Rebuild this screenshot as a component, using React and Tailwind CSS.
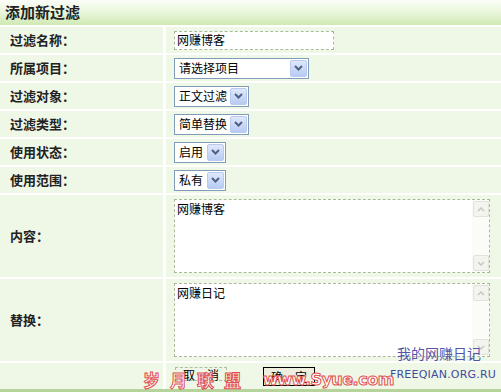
import React from "react";

const font = { fontFamily: '"Noto Sans CJK SC", "Noto Sans", sans-serif' };

function Arrow() {
  return (
    <span className="flex h-[17px] w-[17px] shrink-0 items-center justify-center rounded-[2px] border border-[#b9c9ef] bg-gradient-to-b from-[#dfe8fb] to-[#b9cbf3]">
      <svg width="9" height="6" viewBox="0 0 9 6">
        <path d="M1 1 L4.5 4.5 L8 1" fill="none" stroke="#4d6185" strokeWidth="2" />
      </svg>
    </span>
  );
}

function Select({ value, width }) {
  return (
    <div
      className="flex h-[21px] items-center justify-between border border-[#7f9db9] bg-white pl-[4px] pr-[1px] text-[12px] text-black"
      style={{ width }}
    >
      <span className="whitespace-nowrap leading-none">{value}</span>
      <Arrow />
    </div>
  );
}

function ScrollBtn({ up }) {
  return (
    <span className="flex h-[16px] w-[16px] items-center justify-center rounded-[2px] border border-[#e2e2dc] bg-[#f4f4ef]">
      <svg width="8" height="5" viewBox="0 0 8 5">
        <path d={up ? "M1 4 L4 1 L7 4" : "M1 1 L4 4 L7 1"} fill="none" stroke="#c8c8c0" strokeWidth="1.5" />
      </svg>
    </span>
  );
}

function Area({ text }) {
  return (
    <div className="flex h-[74px] w-[316px] border border-dashed border-[#a9b99a] bg-white">
      <div className="flex-1 px-[2px] pt-[1px] text-[12px] leading-[16px] text-black">{text}</div>
      <div className="flex w-[17px] flex-col justify-between bg-[#fbfbf8] p-[1px]">
        <ScrollBtn up />
        <ScrollBtn />
      </div>
    </div>
  );
}

function Row({ label, h = "h-[26px]", children }) {
  return (
    <>
      <div className={`${h} flex items-center bg-[#eff7e7] pl-[10px] text-[13px] font-bold text-[#222]`}>
        {label}
      </div>
      <div className={`${h} flex items-center bg-[#eff7e7] pl-[8px]`}>{children}</div>
    </>
  );
}

export default function App() {
  return (
    <div className="relative h-[392px] w-[501px] overflow-hidden bg-white" style={font}>
      <div className="flex h-[25px] items-center bg-gradient-to-b from-[#fbfdf8] via-[#eaf6dc] to-[#cfe9b4] pl-[5px] text-[15px] font-bold text-[#222]">
        添加新过滤
      </div>
      <div className="mt-[2px] grid grid-cols-[163px_1fr] gap-x-[3px] gap-y-[2px]">
        <Row label="过滤名称：">
          <div className="flex h-[19px] w-[160px] items-center border border-dashed border-[#a9b99a] bg-white pl-[2px] text-[12px] text-black">
            网赚博客
          </div>
        </Row>
        <Row label="所属项目：">
          <Select value="请选择项目" width={135} />
        </Row>
        <Row label="过滤对象：">
          <Select value="正文过滤" width={75} />
        </Row>
        <Row label="过滤类型：">
          <Select value="简单替换" width={75} />
        </Row>
        <Row label="使用状态：">
          <Select value="启用" width={52} />
        </Row>
        <Row label="使用范围：">
          <Select value="私有" width={52} />
        </Row>
        <Row label="内容：" h="h-[82px]">
          <Area text="网赚博客" />
        </Row>
        <Row label="替换：" h="h-[82px]">
          <Area text="网赚日记" />
        </Row>
        <div className="h-[26px] bg-[#eff7e7]" />
        <div className="flex h-[26px] items-start gap-[36px] bg-[#eff7e7] pl-[9px] pt-[4px]">
          <div className="flex h-[14px] w-[52px] items-start justify-center gap-[12px] border border-dashed border-[#b0bca6] text-[12px] leading-[14px] text-black">
            <span>取</span>
            <span>消</span>
          </div>
          <div className="flex h-[19px] w-[52px] items-center justify-center gap-[12px] border border-black bg-[#eeeede] text-[12px] text-black">
            <span>确</span>
            <span>定</span>
          </div>
        </div>
      </div>
      <div className="absolute bottom-0 left-0 h-[3px] w-full bg-[#b7d39c]" />

      <div className="absolute left-[397px] top-[346px] text-[14px] leading-none text-[#5256a8]">我的网赚日记</div>
      <div className="absolute left-[390px] top-[369px] text-[11px] leading-none tracking-[0.2px] text-[#3f4aa0]" style={{ fontFamily: '"DejaVu Sans", sans-serif' }}>
        FREEQIAN.ORG.RU
      </div>
      <div className="absolute left-[143px] top-[371px] flex items-center gap-[12px] text-[17px] font-bold leading-none text-white [-webkit-text-stroke:1px_#e05050]">
        <span className="tracking-[10px]">岁月联盟</span>
        <span className="text-[16px] tracking-[-0.5px]" style={{ fontFamily: '"DejaVu Sans", sans-serif' }}>www.Syue.com</span>
      </div>
    </div>
  );
}
